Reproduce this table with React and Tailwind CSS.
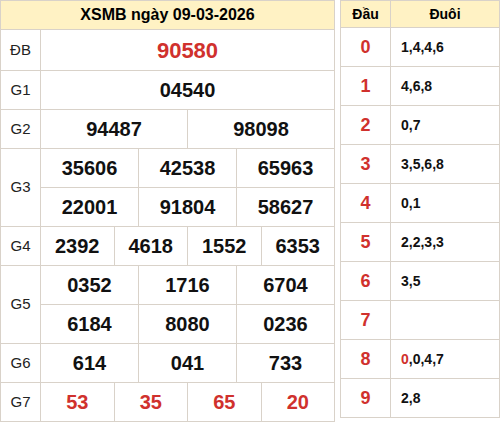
import React from 'react'

/* ── Data ── */
const PRIZES = [
  { label: 'ĐB', rows: [['90580']], special: true },
  { label: 'G1', rows: [['04540']] },
  { label: 'G2', rows: [['94487', '98098']] },
  { label: 'G3', rows: [['35606', '42538', '65963'], ['22001', '91804', '58627']] },
  { label: 'G4', rows: [['2392', '4618', '1552', '6353']] },
  { label: 'G5', rows: [['0352', '1716', '6704'], ['6184', '8080', '0236']] },
  { label: 'G6', rows: [['614', '041', '733']] },
  { label: 'G7', rows: [['53', '35', '65', '20']], red: true },
]

const LOTO = [
  ['0', '1,4,4,6'],
  ['1', '4,6,8'],
  ['2', '0,7'],
  ['3', '3,5,6,8'],
  ['4', '0,1'],
  ['5', '2,2,3,3'],
  ['6', '3,5'],
  ['7', ''],
  ['8', <><span className="text-[#d0312d]">0</span>,0,4,7</>],
  ['9', '2,8'],
]

const bd = 'border border-[#d9d2c9]'

function ResultTable() {
  return (
    <table className="table-fixed border-collapse w-[335px]">
      <colgroup>
        <col className="w-[40px]" />
        {Array.from({ length: 12 }).map((_, i) => <col key={i} />)}
      </colgroup>
      <thead>
        <tr>
          <th colSpan={13} className={`${bd} h-[29px] bg-[#fff2c4] text-[16px] font-bold text-black`}>
            XSMB ngày 09-03-2026
          </th>
        </tr>
      </thead>
      <tbody>
        {PRIZES.map((p) =>
          p.rows.map((nums, ri) => (
            <tr key={p.label + ri}>
              {ri === 0 && (
                <td rowSpan={p.rows.length} className={`${bd} text-center text-[15px] text-[#222]`}>
                  {p.label}
                </td>
              )}
              {nums.map((n, i) => (
                <td
                  key={i}
                  colSpan={12 / nums.length}
                  className={`${bd} text-center font-bold ${p.special ? 'h-[41px] text-[22px] text-[#d0312d]' : 'h-[39px] text-[20px]'} ${p.red ? 'text-[#d0312d]' : ''} ${!p.special && !p.red ? 'text-[#111]' : ''}`}
                >
                  {n}
                </td>
              ))}
            </tr>
          ))
        )}
      </tbody>
    </table>
  )
}

function LotoTable() {
  return (
    <table className="table-fixed border-collapse w-[160px] self-start">
      <colgroup>
        <col className="w-[50px]" />
        <col />
      </colgroup>
      <thead>
        <tr>
          <th className={`${bd} h-[27px] bg-[#fff2c4] text-[14px] font-bold`}>Đầu</th>
          <th className={`${bd} h-[27px] bg-[#fff2c4] text-[14px] font-bold`}>Đuôi</th>
        </tr>
      </thead>
      <tbody>
        {LOTO.map(([head, tail]) => (
          <tr key={head}>
            <td className={`${bd} h-[39px] text-center text-[18px] font-bold text-[#d0312d]`}>{head}</td>
            <td className={`${bd} h-[39px] pl-[10px] text-[14px] font-bold text-[#111]`}>{tail}</td>
          </tr>
        ))}
      </tbody>
    </table>
  )
}

export default function App() {
  return (
    <div className="w-[500px] h-[422px] bg-white flex gap-[5px] font-['Liberation_Sans',Arial,sans-serif]">
      <ResultTable />
      <LotoTable />
    </div>
  )
}
